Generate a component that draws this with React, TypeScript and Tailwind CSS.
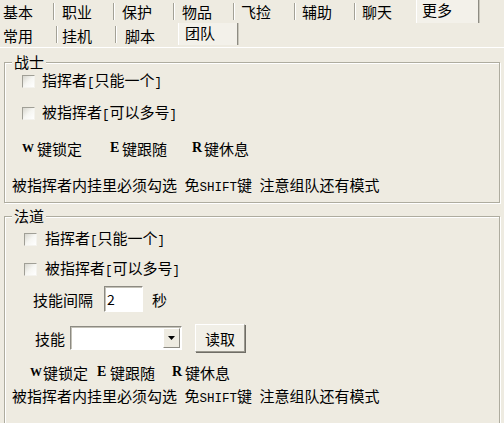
import React from "react";

const FONT = "font-['Noto_Sans_CJK_SC','Liberation_Sans',sans-serif]";

function M({ children }: { children: React.ReactNode }) {
  return <span className="font-['Liberation_Mono',monospace] text-[12.5px] whitespace-pre">{children}</span>;
}

function Sep() {
  return (
    <span className="flex h-[17px] w-[2px] shrink-0">
      <span className="w-[1px] h-full bg-[#a3a196]" />
      <span className="w-[1px] h-full bg-white" />
    </span>
  );
}

function Tab({ label, w, pl, sep, sepAt }: { label: string; w: number; pl: number; sep: boolean; sepAt?: number }) {
  return (
    <div className="relative h-full shrink-0 flex items-center" style={{ width: w }}>
      <span className="leading-[15px]" style={{ paddingLeft: pl }}>{label}</span>
      {sep && (
        <span className="absolute top-[3px]" style={{ left: sepAt }}>
          <Sep />
        </span>
      )}
    </div>
  );
}

function CheckBox() {
  return (
    <span className="block w-[13px] h-[13px] shrink-0 border border-t-[#a09f96] border-l-[#a09f96] border-b-[#f4f3ee] border-r-[#f4f3ee] bg-gradient-to-br from-[#d8d7cf] via-[#f6f6f2] to-white" />
  );
}

function CheckRow({ pl, children, gap, className }: { pl: number; children: React.ReactNode; gap: number; className: string }) {
  return (
    <div className={`flex items-center h-[24px] ${className}`} style={{ paddingLeft: pl }}>
      <CheckBox />
      <span className="leading-[15px]" style={{ marginLeft: gap }}>{children}</span>
    </div>
  );
}

function KeyGroup({ k, text, w, kw }: { k: string; text: string; w: number; kw: number }) {
  const size = k === "W" ? "text-[12px]" : "text-[14px]";
  return (
    <div className="flex items-center shrink-0" style={{ width: w }}>
      <span className={`font-['Liberation_Serif',serif] font-bold ${size} leading-[14px] shrink-0`} style={{ width: kw }}>{k}</span>
      <span className="leading-[15px]">{text}</span>
    </div>
  );
}

function GroupBox({ title, h, children }: { title: string; h: number; children: React.ReactNode }) {
  return (
    <div
      className="relative shrink-0 border border-[#aeac9f] shadow-[inset_1px_1px_0_#ffffff,1px_1px_0_#ffffff]"
      style={{ height: h }}
    >
      <span className="absolute left-[7px] top-[-2px] -translate-y-1/2 px-[2px] bg-[#eeebe1] leading-[15px]">{title}</span>
      {children}
    </div>
  );
}

function Note({ className }: { className: string }) {
  return (
    <div className={`flex items-center h-[24px] pl-[7px] ${className}`}>
      <span className="leading-[15px] whitespace-pre">
        被指挥者内挂里必须勾选<M> </M>免<M>SHIFT</M>键<M> </M>注意组队还有模式
      </span>
    </div>
  );
}

export default function App() {
  return (
    <div className={`w-[504px] h-[423px] overflow-hidden bg-[#eeebe1] text-black text-[15px] ${FONT}`}>
      {/* Tab row 1 */}
      <div className="flex h-[23px]">
        <Tab label="基本" w={60} pl={3} sep sepAt={53} />
        <Tab label="职业" w={60} pl={2} sep sepAt={53} />
        <Tab label="保护" w={60} pl={2} sep sepAt={53} />
        <Tab label="物品" w={60} pl={2} sep sepAt={53} />
        <Tab label="飞捡" w={60} pl={1} sep sepAt={54} />
        <Tab label="辅助" w={60} pl={2} sep sepAt={54} />
        <Tab label="聊天" w={56} pl={2} sep={false} />
        <div className="h-[23px] w-[63px] shrink-0 bg-[#f3f1ea] border-l border-l-white border-r border-r-[#8e8c83] shadow-[1px_0_0_#c9c7bc] flex pt-[2px]">
          <span className="pl-[5px] leading-[15px]">更多</span>
        </div>
      </div>
      {/* Tab row 2 */}
      <div className="flex h-[24px]">
        <Tab label="常用" w={60} pl={3} sep sepAt={56} />
        <Tab label="挂机" w={58} pl={2} sep sepAt={55} />
        <Tab label="脚本" w={60} pl={7} sep={false} />
        <div className="h-[22px] w-[60px] shrink-0 bg-[#f3f1ea] border-l border-l-white border-r border-r-[#8e8c83] shadow-[1px_0_0_#c9c7bc] flex pt-[2px]">
          <span className="pl-[6px] leading-[15px]">团队</span>
        </div>
      </div>
      {/* Panel */}
      <div className="border-t border-t-white pt-[14px] px-[4px] flex flex-col">
        <GroupBox title="战士" h={141}>
          <div className="flex flex-col pt-[6px]">
            <CheckRow pl={17} gap={7} className="">
              指挥者<M>[</M>只能一个<M>]</M>
            </CheckRow>
            <CheckRow pl={17} gap={7} className="mt-[8px]">
              被指挥者<M>[</M>可以多号<M>]</M>
            </CheckRow>
            <div className="flex items-center h-[24px] mt-[11px] pl-[17px]">
              <KeyGroup k="W" text="键锁定" w={88} kw={15} />
              <KeyGroup k="E" text="键跟随" w={82} kw={12} />
              <KeyGroup k="R" text="键休息" w={70} kw={12} />
            </div>
            <Note className="mt-[14px]" />
          </div>
        </GroupBox>
        <div className="mt-[13px]">
          <GroupBox title="法道" h={230}>
            <div className="flex flex-col pt-[10px]">
              <CheckRow pl={19} gap={8} className="">
                指挥者<M>[</M>只能一个<M>]</M>
              </CheckRow>
              <CheckRow pl={19} gap={8} className="mt-[6px]">
                被指挥者<M>[</M>可以多号<M>]</M>
              </CheckRow>
              <div className="flex items-center h-[26px] mt-[5px] pl-[28px]">
                <span className="leading-[15px] w-[71px]">技能间隔</span>
                <div className="w-[39px] h-[26px] bg-white border border-t-[#8c8a82] border-l-[#8c8a82] border-b-white border-r-white shadow-[inset_1px_1px_0_#c4c2b8] flex items-center pl-[2px]">
                  <span className="leading-[15px] text-[14px]">2</span>
                </div>
                <span className="leading-[15px] ml-[9px]">秒</span>
              </div>
              <div className="flex items-center h-[28px] mt-[12px] pl-[30px]">
                <span className="leading-[15px] w-[35px]">技能</span>
                <div className="w-[112px] h-[24px] bg-white border border-t-[#8c8a82] border-l-[#8c8a82] border-b-white border-r-white shadow-[inset_1px_1px_0_#c4c2b8] flex justify-end items-stretch p-[1px] pl-0">
                  <div className="w-[17px] bg-[#eeebe1] border border-t-white border-l-white border-b-[#8c8a82] border-r-[#8c8a82] flex items-center justify-center">
                    <svg width="7" height="4" viewBox="0 0 7 4">
                      <path d="M0 0H7L3.5 4Z" fill="#000" />
                    </svg>
                  </div>
                </div>
                <div className="ml-[13px] w-[50px] h-[28px] bg-[#f1efe7] border border-t-white border-l-white border-b-[#9a988e] border-r-[#9a988e] shadow-[1px_1px_0_#6f6d66] flex items-center justify-center">
                  <span className="leading-[15px]">读取</span>
                </div>
              </div>
              <div className="flex items-center h-[24px] mt-[8px] pl-[25px]">
                <KeyGroup k="W" text="键锁定" w={67} kw={13} />
                <KeyGroup k="E" text="键跟随" w={75} kw={13} />
                <KeyGroup k="R" text="键休息" w={70} kw={13} />
              </div>
              <Note className="mt-[1px]" />
            </div>
          </GroupBox>
        </div>
      </div>
    </div>
  );
}
